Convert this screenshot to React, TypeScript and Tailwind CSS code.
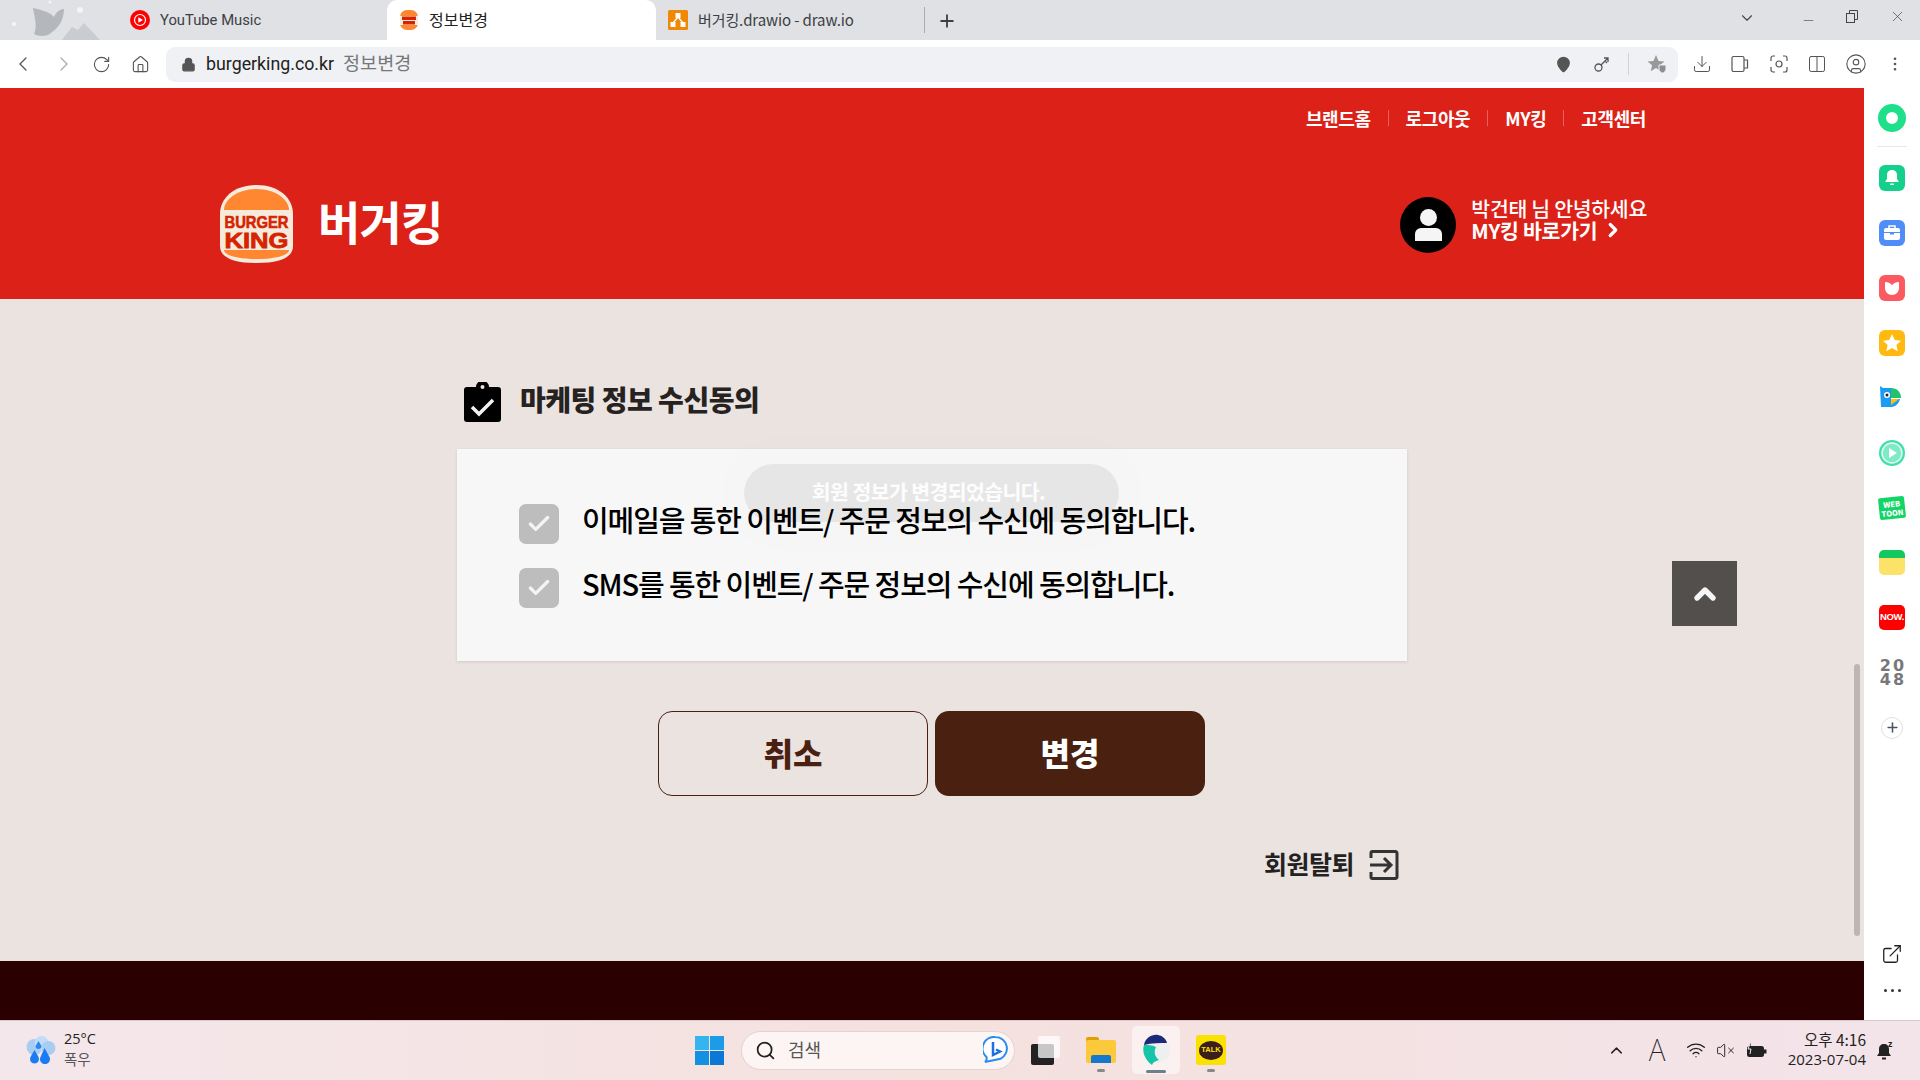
import React from "react";
import { ChevronDown, ChevronLeft, ChevronRight, RotateCw, Home, Lock, Minus, X, Plus, Download, Columns2, CircleUser, EllipsisVertical, MapPin, ChevronUp, Search, Wifi, VolumeX, ExternalLink, Check } from "lucide-react";

function BurgerLogo({ size = 75 }: { size?: number }) {
  return (
    <svg width={size} height={size * 80 / 75} viewBox="0 0 75 80" className="shrink-0">
      <path d="M37.5 1C60 1 74 14 74 30V62C74 73 62 79 37.5 79S1 73 1 62V30C1 14 15 1 37.5 1Z" fill="#f5ebdc" />
      <path d="M37.5 5C57 5 70 16 70 26H5C5 16 18 5 37.5 5Z" fill="#ff8732" />
      <path d="M5 66H70C70 71 58 75 37.5 75S5 71 5 66Z" fill="#ff8732" />
      <text x="37.5" y="44" textAnchor="middle" fontFamily="Liberation Sans" fontWeight="700" fontSize="17" fill="#d62300" textLength="64" lengthAdjust="spacingAndGlyphs" stroke="#d62300" strokeWidth="0.6">BURGER</text>
      <text x="37.5" y="64" textAnchor="middle" fontFamily="Liberation Sans" fontWeight="700" fontSize="22" fill="#d62300" textLength="64" lengthAdjust="spacingAndGlyphs" stroke="#d62300" strokeWidth="0.8">KING</text>
    </svg>
  );
}

function ThemeArt() {
  return (
    <svg width="110" height="40" viewBox="0 0 110 40" className="absolute left-0 top-0">
      <path d="M62 40 72 27 78 30 84 23 100 40Z" fill="#c9ccd1" />
      <path d="M34 34C38 36 46 38 52 32 62 26 64 14 64 9 60 9 56 12 54 17 50 12 42 10 33 8 34 16 38 26 34 34Z" fill="#b4b7bc" />
      <circle cx="14" cy="24" r="2" fill="#f4f5f7" />
      <circle cx="80" cy="10" r="3" fill="#f4f5f7" />
      <circle cx="50" cy="2" r="1.5" fill="#f4f5f7" />
    </svg>
  );
}

function YtIcon() {
  return (
    <svg width="20" height="20" viewBox="0 0 20 20" className="shrink-0">
      <circle cx="10" cy="10" r="10" fill="#f00" />
      <circle cx="10" cy="10" r="5.5" fill="none" stroke="#fff" strokeWidth="1.2" />
      <path d="M8.3 7.3 13 10l-4.7 2.7Z" fill="#fff" />
    </svg>
  );
}

function DrawioIcon() {
  return (
    <svg width="20" height="20" viewBox="0 0 20 20" className="shrink-0">
      <rect width="20" height="20" rx="1.5" fill="#f08705" />
      <path d="M10 7 5 13M10 7l5 6" stroke="#fff" strokeWidth="1.3" />
      <rect x="7.5" y="3" width="5" height="5" fill="#fff" />
      <rect x="2.5" y="12" width="5" height="5" fill="#fff" />
      <rect x="12.5" y="12" width="5" height="5" fill="#fff" />
    </svg>
  );
}

function ChromeBar() {
  return (
    <div className="shrink-0">
      <div className="relative h-10 bg-[#dfe1e5] flex items-stretch pl-[120px] text-[14px] text-[#3c4043]">
        <ThemeArt />
        <div className="relative w-[267px] flex items-center gap-[10px] pl-[10px]">
          <YtIcon />
          <span className="text-[14.8px] [font-family:'Roboto',sans-serif]">YouTube Music</span>
        </div>
        <div className="relative w-[269px] bg-white rounded-t-[10px] flex items-center gap-[11px] pl-[13px] text-[#222]">
          <svg width="18" height="20" viewBox="0 0 18 20" className="shrink-0">
            <rect width="18" height="20" rx="7" fill="#ff8732" />
            <rect y="6" width="18" height="9" fill="#f5ebdc" />
            <rect x="2" y="6.5" width="14" height="3.5" fill="#d62300" />
            <rect x="3" y="11" width="12" height="3.5" fill="#d62300" />
          </svg>
          <span className="text-[16px] leading-none -mt-[2px]">정보변경</span>
        </div>
        <div className="relative w-[268px] flex items-center gap-[10px] pl-[12px]">
          <DrawioIcon />
          <span className="text-[15px] tracking-[-0.1px] leading-none -mt-[2px]">버거킹.drawio - draw.io</span>
        </div>
        <div className="w-px h-[26px] self-center bg-[#a9acb1]" />
        <div className="w-[44px] flex items-center justify-center pt-[2px]">
          <Plus size={20} strokeWidth={2.2} color="#3c4043" />
        </div>
        <div className="ml-auto flex items-center pb-[8px] text-[#444]">
          <ChevronDown size={18} strokeWidth={1.5} className="mr-[45px] mt-[4px]" />
          <Minus size={15} strokeWidth={1} className="mr-[29px] mt-[8px]" />
          <svg width="15" height="15" viewBox="0 0 15 15" fill="none" stroke="#444" className="mr-[29px]">
            <rect x="1.5" y="4.5" width="8" height="9" />
            <path d="M4.5 4.5V1.5h8v9h-3" />
          </svg>
          <X size={17} strokeWidth={1} className="mr-[14px]" />
        </div>
      </div>
      <div className="h-12 bg-white rounded-t-[10px] flex items-center text-[#555]">
        <div className="w-[166px] flex items-center pl-[11px]">
          <ChevronLeft size={24} strokeWidth={1.3} />
          <ChevronRight size={24} strokeWidth={1.3} color="#aaa" className="ml-[17px]" />
          <RotateCw size={19} strokeWidth={1.4} className="ml-[16px]" />
          <Home size={19} strokeWidth={1.4} className="ml-[20px]" />
        </div>
        <div className="w-[1512px] h-[35px] bg-[#eff1f4] rounded-[9px] flex items-center pl-[15px]">
          <Lock size={15} fill="#555" strokeWidth={2} />
          <span className="ml-[10px] text-[#222] text-[17.8px] [font-family:'Roboto',sans-serif]">burgerking.co.kr</span>
          <span className="ml-[9px] text-[#777] text-[18.5px] leading-none -mt-[3px]">정보변경</span>
          <div className="ml-auto flex items-center pr-[11px]">
            <MapPin size={17} fill="#555" color="#555" strokeWidth={2} />
            <svg width="18" height="18" viewBox="0 0 18 18" fill="none" stroke="#555" strokeWidth="1.3" className="ml-[21px]">
              <circle cx="5.500" cy="12.500" r="3.500" />
              <path d="M8 10l7-7M11 3h4v4M12 6l2 2" />
            </svg>
            <div className="w-px h-[22px] bg-[#d0d2d6] ml-[17px]" />
            <svg width="20" height="20" viewBox="0 0 20 20" className="ml-[18px]">
              <path d="M9 1l2.500 6 6 .4-4.600 3.800 1.400 6L9 14l-5.300 3.200 1.400-6L.5 7.400l6-.4Z" fill="#999" />
              <path d="M12 11h7v4c0 2-2 4-3.500 4S12 17 12 15Z" fill="#8a8d91" stroke="#eff1f4" />
            </svg>
          </div>
        </div>
        <div className="flex items-center pl-[14px]">
          <Download size={20} strokeWidth={1.2} />
          <svg width="20" height="20" viewBox="0 0 20 20" fill="none" stroke="#555" strokeWidth="1.200" className="ml-[18px]">
            <rect x="2" y="2.500" width="12" height="15" rx="1.500" />
            <path d="M14 6h3.500v8H14" />
          </svg>
          <svg width="20" height="20" viewBox="0 0 20 20" fill="none" stroke="#555" strokeWidth="1.200" className="ml-[19px]">
            <path d="M6 2H4a2 2 0 0 0-2 2v3M14 2h2a2 2 0 0 1 2 2v3M6 18H4a2 2 0 0 1-2-2v-3M14 18h2a2 2 0 0 0 2-2v-3" />
            <circle cx="10" cy="10" r="3" />
          </svg>
          <Columns2 size={20} strokeWidth={1.2} className="ml-[18px]" />
          <CircleUser size={22} strokeWidth={1.2} className="ml-[18px]" />
          <EllipsisVertical size={18} strokeWidth={1.6} className="ml-[19px]" />
        </div>
      </div>
    </div>
  );
}

function Header() {
  const links = ["브랜드홈", "로그아웃", "MY킹", "고객센터"];
  return (
    <header className="h-[211px] shrink-0 bg-[#dc2218] text-white relative">
      <div className="h-[60px] flex items-center justify-end pr-[218px] text-[18px] font-bold tracking-[-0.4px]">
        {links.map((l, i) => (
          <React.Fragment key={l}>
            {i > 0 && <span className="w-px h-[16px] bg-white/30 mx-[17px]" />}
            <span>{l}</span>
          </React.Fragment>
        ))}
      </div>
      <div className="flex items-center justify-between pl-[219px] pr-[217px] mt-[36px]">
        <div className="flex items-center gap-[24px]">
          <BurgerLogo />
          <span className="text-[46px] font-bold leading-none tracking-[-0.8px] -mt-[8px]">버거킹</span>
        </div>
        <div className="flex items-center gap-[15px] mt-[1px]">
          <div className="w-[56px] h-[56px] rounded-full bg-black flex flex-col items-center justify-center">
            <span className="w-[17px] h-[17px] rounded-full bg-[#f5f5f5]" />
            <span className="w-[27px] h-[13px] mt-[2px] rounded-t-[6px] bg-[#f5f5f5]" />
          </div>
          <div className="text-[20.5px] leading-[22px] font-medium tracking-[-0.3px] -mt-[12px]">
            <div>박건태 님 안녕하세요</div>
            <div className="font-bold flex items-center">MY킹 바로가기<ChevronRight size={22} strokeWidth={3.5} className="ml-[5px] mr-[15px]" /></div>
          </div>
        </div>
      </div>
    </header>
  );
}

function BoxCheck() {
  return (
    <span className="w-10 h-10 shrink-0 rounded-[7px] bg-[#bdbdbd] flex items-center justify-center">
      <Check size={26} strokeWidth={3} color="#f4f4f4" />
    </span>
  );
}

function Content() {
  return (
    <main className="relative flex-1 bg-[#ebe3e0]">
      <div className="w-[950px] mx-auto pt-[83px]">
        <div className="flex items-center pl-[7px] h-[40px]">
          <svg width="37" height="40" viewBox="0 0 37 40" className="shrink-0">
            <path d="M3 5h9a6.500 6.500 0 0 1 13 0h9a3 3 0 0 1 3 3v29a3 3 0 0 1-3 3H3a3 3 0 0 1-3-3V8a3 3 0 0 1 3-3Z" fill="#000" />
            <circle cx="18.500" cy="5" r="2" fill="#ebe3e0" />
            <path d="M8 25l7 7 14-14" fill="none" stroke="#f2f2f2" strokeWidth="3.500" />
          </svg>
          <h2 className="ml-[19px] text-[28px] font-black text-[#26221f] tracking-[-0.5px] leading-none -mt-[6px]">마케팅 정보 수신동의</h2>
        </div>
        <div className="mt-[27px] h-[212px] bg-[#f7f7f7] shadow-[0_1px_3px_rgba(0,0,0,0.12)] pt-[55px] pl-[62px]">
          <div className="flex items-center gap-[23px] h-10">
            <BoxCheck />
            <span className="text-[29px] font-medium text-black tracking-[-1.1px] -mt-[8px]">이메일을 통한 이벤트/ 주문 정보의 수신에 동의합니다.</span>
          </div>
          <div className="flex items-center gap-[23px] h-10 mt-[24px]">
            <BoxCheck />
            <span className="text-[29px] font-medium text-black tracking-[-1.1px] -mt-[8px]">SMS를 통한 이벤트/ 주문 정보의 수신에 동의합니다.</span>
          </div>
        </div>
        <div className="mt-[50px] flex pl-[201px] gap-[7px]">
          <button className="w-[270px] h-[85px] rounded-[14px] border border-[#4a2010] text-[#4a2010] text-[32px] font-black leading-none pb-[4px]">취소</button>
          <button className="w-[270px] h-[85px] rounded-[14px] bg-[#4a2010] text-white text-[32px] font-black leading-none pb-[4px]">변경</button>
        </div>
        <div className="mt-[51px] flex items-center justify-end pr-[8px] gap-[15px] text-[#222]">
          <span className="text-[25px] font-bold tracking-[-0.5px] -mt-[2px]">회원탈퇴</span>
          <svg width="30" height="30" viewBox="0 0 30 30" fill="none" stroke="#333" strokeWidth="3" className="shrink-0">
            <path d="M2 8V3a1.500 1.500 0 0 1 1.500-1.500h23A1.500 1.500 0 0 1 28 3v24a1.500 1.500 0 0 1-1.500 1.500h-23A1.500 1.500 0 0 1 2 27v-5" />
            <path d="M1 15h21M15 8l7 7-7 7" />
          </svg>
        </div>
      </div>
      <div className="absolute left-[744px] top-[165px] w-[375px] h-[58px] rounded-[30px] bg-black/[0.065] shadow-[0_0_60px_30px_rgba(0,0,0,0.008)] flex justify-center pt-[8px] pr-[6px]">
        <span className="text-[20.5px] font-bold text-white/90 tracking-[-0.6px] leading-[38px]">회원 정보가 변경되었습니다.</span>
      </div>
      <div className="absolute left-[1672px] top-[262px] w-[65px] h-[65px] bg-[#524f4c] flex items-center justify-center">
        <ChevronUp size={32} strokeWidth={4} color="#f5f5f5" />
      </div>
      <div className="absolute left-[1854px] top-[365px] w-[6px] h-[272px] rounded-full bg-[#bdb7b3]" />
    </main>
  );
}

function Side({ children }: { children: React.ReactNode }) {
  return <div className="h-[55px] shrink-0 flex items-center justify-center">{children}</div>;
}

function Sidebar() {
  return (
    <aside className="w-[56px] shrink-0 bg-white flex flex-col items-center pt-[2px] relative">
      <div className="h-[56px] shrink-0 flex items-center justify-center">
        <span className="w-7 h-7 rounded-full border-[8px] border-[#1fe08a] bg-white" />
      </div>
      <div className="w-[30px] h-px bg-[#e8e8e8] shrink-0" />
      <div className="h-[3px] shrink-0" />
      <Side>
        <svg width="26" height="26" viewBox="0 0 26 26"><rect width="26" height="26" rx="6" fill="#14d08c" /><path d="M13 5c-3.500 0-5 2.500-5 5v4l-2 3h14l-2-3v-4c0-2.500-1.500-5-5-5Z" fill="#fff" /><rect x="11" y="18.500" width="4" height="1.500" rx="0.700" fill="#fff" /></svg>
      </Side>
      <Side>
        <svg width="26" height="26" viewBox="0 0 26 26"><rect width="26" height="26" rx="6" fill="#4f8ef7" /><rect x="5" y="8" width="16" height="12" rx="2" fill="#fff" /><path d="M10 8V6h6v2" fill="none" stroke="#fff" strokeWidth="1.500" /><rect x="5" y="12" width="16" height="1" fill="#4f8ef7" /><rect x="11" y="13" width="4" height="1.500" fill="#4f8ef7" /></svg>
      </Side>
      <Side>
        <svg width="26" height="26" viewBox="0 0 26 26"><rect width="26" height="26" rx="6" fill="#fb5a60" /><path d="M6 7c3 0 5 1 7 3 2-2 4-3 7-3v6c0 4-3 7-7 7s-7-3-7-7Z" fill="#fff" /></svg>
      </Side>
      <Side>
        <svg width="26" height="26" viewBox="0 0 26 26"><rect width="26" height="26" rx="6" fill="#ffb90f" /><path d="M13 4l2.800 6 6.200.7-4.600 4.200 1.300 6.300-5.700-3.200-5.700 3.200 1.300-6.300L4 10.700l6.200-.7Z" fill="#fff" /></svg>
      </Side>
      <Side>
        <svg width="26" height="26" viewBox="0 0 26 26" className="mt-[1px]"><path d="M1 1l3 2h8v11l9 0c-1 4-4 8-9 8H2Z" fill="#1a9cf5" /><path d="M12 3c6 0 10 4 10 10H12Z" fill="#23c26b" /><path d="M12 14h8l-8 6Z" fill="#ffc107" /><circle cx="8" cy="10" r="3" fill="#fff" /><circle cx="8" cy="10" r="1.500" fill="#222" /></svg>
      </Side>
      <Side>
        <svg width="26" height="26" viewBox="0 0 26 26"><circle cx="13" cy="13" r="13" fill="#3fdfa8" /><circle cx="13" cy="13" r="10" fill="#7feac5" stroke="#e4fbf3" strokeWidth="1.500" /><path d="M10 8l8 5-8 5Z" fill="#fff" /></svg>
      </Side>
      <Side>
        <div className="w-[26px] h-[22px] bg-[#12d566] -rotate-6 rounded-[2px] flex flex-col items-center justify-center text-white text-[7.5px] font-black leading-[9px]">
          <span>WEB</span>
          <span>TOON</span>
        </div>
      </Side>
      <Side>
        <div className="w-[26px] h-[25px] rounded-[5px] overflow-hidden flex flex-col">
          <div className="h-[8px] bg-[#12c85f]" />
          <div className="flex-1 bg-[#fde26a]" />
        </div>
      </Side>
      <Side>
        <div className="w-[26px] h-[25px] rounded-[5px] bg-[#ff0000] flex items-center justify-center text-white text-[9.5px] font-black tracking-[-0.3px] [font-family:'Liberation_Sans',sans-serif]">NOW.</div>
      </Side>
      <Side>
        <div className="text-[#77787a] text-[16px] leading-[14px] font-bold text-center tracking-[2px] pl-[2px] [font-family:'DejaVu_Sans',sans-serif]">
          <div>20</div>
          <div>48</div>
        </div>
      </Side>
      <Side>
        <div className="w-[22px] h-[22px] rounded-full border border-[#e0e0e0] flex items-center justify-center">
          <Plus size={15} strokeWidth={2.5} color="#4b5563" />
        </div>
      </Side>
      <div className="mt-auto flex flex-col items-center pb-[28px] text-[#222]">
        <ExternalLink size={22} strokeWidth={1.4} />
        <div className="flex gap-[4px] mt-[24px]">
          <span className="w-[3px] h-[3px] rounded-full bg-[#333]" />
          <span className="w-[3px] h-[3px] rounded-full bg-[#333]" />
          <span className="w-[3px] h-[3px] rounded-full bg-[#333]" />
        </div>
      </div>
    </aside>
  );
}

function Taskbar() {
  return (
    <div className="h-[60px] shrink-0 border-t border-[#d9cbcb] bg-[linear-gradient(90deg,#f4e7eb,#f5e1de_50%,#f3e4ea)] flex items-center relative text-[#222] pb-[1px]">
      <div className="w-[741px] flex items-center pl-[24px] shrink-0">
        <svg width="32" height="28" viewBox="0 0 31 28">
          <circle cx="10" cy="11" r="8" fill="#a9cdf2" />
          <circle cx="17" cy="7" r="7" fill="#c2dcf7" />
          <circle cx="24" cy="12" r="7" fill="#a9cdf2" />
          <path d="M14 5l3 5a3 3 0 1 1-6 0Z" fill="#2b87f0" />
          <path d="M10 14l4 7a4.500 4.500 0 1 1-8 0Z" fill="#1a7bf5" />
          <path d="M20 12l5 9a5 5 0 1 1-9 0Z" fill="#1a7bf5" />
        </svg>
        <div className="ml-[8px] text-[14.5px] leading-[20px] -mt-[2px]">
          <div className="[font-family:'Open_Sans',sans-serif]">25°C</div>
          <div className="text-[#555]">폭우</div>
        </div>
      </div>
      <div className="absolute left-[695px] top-[15px] w-[29px] h-[29px] grid grid-cols-2 gap-[1.500px]">
        <span className="bg-[#35b4f0]" />
        <span className="bg-[#1c9be6]" />
        <span className="bg-[#1490e2]" />
        <span className="bg-[#0a78d4]" />
      </div>
      <div className="w-[274px] h-[39px] shrink-0 rounded-full bg-[#fcf5f4] border border-[#e2d2d2] flex items-center pl-[13px] relative">
        <Search size={21} strokeWidth={2} color="#222" />
        <span className="ml-[12px] text-[18px] text-[#555] leading-none -mt-[2px]">검색</span>
        <svg width="25" height="28" viewBox="0 0 25 28" className="absolute right-[6px] top-[4px]">
          <path d="M12.500 1a11.500 11.500 0 0 1 5 21.800L2 26c2-1.500 2-3 1.500-5A11.500 11.500 0 0 1 12.500 1Z" fill="#fff" stroke="#2a8bf0" strokeWidth="2" />
          <path d="M10 6v13l7-3.500-4-2" fill="none" stroke="#1e6fe0" strokeWidth="2.500" />
        </svg>
      </div>
      <div className="ml-[16px] w-[29px] h-[29px] shrink-0 relative">
        <span className="absolute left-0 bottom-0 w-[23px] h-[21px] bg-[#222] rounded-[2px]" />
        <span className="absolute right-0 top-0 w-[22px] h-[22px] bg-white/75 rounded-[2px]" />
      </div>
      <div className="ml-[26px] w-[30px] h-[26px] shrink-0 relative">
        <span className="absolute left-0 top-0 w-[13px] h-[5px] bg-[#e0a000] rounded-t-[2px]" />
        <span className="absolute left-0 top-[3px] w-[30px] h-[23px] bg-[#fcc93c] rounded-[2px]" />
        <span className="absolute left-[5px] bottom-0 w-[20px] h-[8px] bg-[#1478cc] rounded-t-[2px]" />
        <span className="absolute left-[11px] -bottom-[9px] w-[8px] h-[3px] rounded-full bg-[#888]" />
      </div>
      <div className="ml-[16px] w-[48px] h-[48px] shrink-0 rounded-[5px] bg-white/50 flex items-center justify-center relative">
        <svg width="28" height="32" viewBox="0 0 28 32">
          <circle cx="15" cy="16" r="13" fill="#eef0f0" />
          <path d="M2 11C3 4 10 0 16 1c5 1 8 4 9 8-7 0-15 0-23 2Z" fill="#1c2a78" />
          <path d="M2 11c-2 6 0 14 8 20 1-3 4-4 7-5-5-4-5-9-3-13-4-2-8-2-12-2Z" fill="#16c4a8" />
        </svg>
        <span className="absolute bottom-[1px] left-[14px] w-[20px] h-[3px] rounded-full bg-[#6d7f8c]" />
      </div>
      <div className="ml-[16px] w-[30px] h-[30px] shrink-0 rounded-[3px] bg-[#fae100] flex items-center justify-center relative">
        <span className="w-[24px] h-[19px] rounded-[50%] bg-[#3a1d1d] text-[#fae100] text-[7.500px] font-bold flex items-center justify-center [font-family:'Liberation_Sans',sans-serif]">TALK</span>
        <span className="absolute left-[11px] -bottom-[7px] w-[8px] h-[3px] rounded-full bg-[#888]" />
      </div>
      <div className="ml-auto flex items-center">
        <ChevronUp size={19} strokeWidth={1.8} />
        <span className="ml-[22px] text-[30px] font-thin leading-none -mt-[4px]">A</span>
        <Wifi size={20} strokeWidth={1.6} className="ml-[20px]" />
        <div className="ml-[10px] flex items-center">
          <VolumeX size={19} strokeWidth={1.2} />
        </div>
        <svg width="21" height="18" viewBox="0 0 21 18" className="ml-[11px]">
          <rect x="1" y="5" width="17" height="11" rx="2.500" fill="#222" />
          <rect x="18" y="8.500" width="2.500" height="4" fill="#222" />
          <path d="M5 0 2 8h3l-1 5" stroke="#f4e4ea" strokeWidth="1" fill="#222" />
        </svg>
        <div className="ml-[21px] text-right leading-[20px] -mt-[3px]">
          <div className="text-[15.5px]">오후 4:16</div>
          <div className="[font-family:'Open_Sans',sans-serif] text-[15px]">2023-07-04</div>
        </div>
        <svg width="18" height="22" viewBox="0 0 18 22" className="ml-[11px] mr-[25px]">
          <path d="M7 5c-3 0-5 2-5 5v4l-2 3h14l-2-3v-4c0-3-2-5-5-5Z" fill="#222" />
          <rect x="5" y="18.500" width="4" height="2" fill="#222" />
          <text x="11" y="8" fontSize="9" fontWeight="700" fill="#222" fontFamily="Liberation Sans">z</text>
        </svg>
      </div>
    </div>
  );
}

export default function App() {
  return (
    <div className="w-[1920px] h-[1080px] overflow-hidden flex flex-col bg-white [font-family:'Noto_Sans_CJK_KR','Noto_Sans',sans-serif]">
      <ChromeBar />
      <div className="flex-1 flex min-h-0">
        <div className="flex-1 flex flex-col min-w-0">
          <Header />
          <Content />
          <div className="h-[59px] shrink-0 bg-[#2a0000]" />
        </div>
        <Sidebar />
      </div>
      <Taskbar />
    </div>
  );
}
